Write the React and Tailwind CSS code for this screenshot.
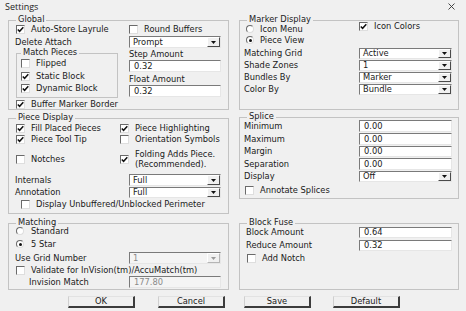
import React from 'react';

const Check = ({ checked }) => (
    <span className="w-[9px] h-[9px] shrink-0 bg-white border border-t-[#6a6a6a] border-l-[#6a6a6a] border-b-[#dedede] border-r-[#dedede] flex items-center justify-center">
        {checked && (
            <svg width="7" height="7" viewBox="0 0 7 7">
                <path d="M0.8 3.4 L2.6 5.3 L6.3 1.2" stroke="#111" strokeWidth="1.5" fill="none" />
            </svg>
        )}
    </span>
);

const Radio = ({ checked }) => (
    <span className="w-[8px] h-[8px] shrink-0 rounded-full bg-white border border-t-[#6a6a6a] border-l-[#6a6a6a] border-b-[#dedede] border-r-[#dedede] flex items-center justify-center">
        {checked && <span className="w-[3px] h-[3px] rounded-full bg-[#111]" />}
    </span>
);

const CheckRow = ({ checked, label, className = '' }) => (
    <div className={`flex items-center ${className}`}>
        <Check checked={checked} />
        <span className="ml-[6px] whitespace-nowrap">{label}</span>
    </div>
);

const Select = ({ value, disabled, className = '' }) => (
    <div className={`flex items-stretch border border-t-[#7a7a7a] border-l-[#7a7a7a] border-b-[#e6e6e6] border-r-[#e6e6e6] ${disabled ? 'bg-[#f4f4f4] text-[#8a8a8a]' : 'bg-white'} ${className}`}>
        <span className="flex-1 flex items-center pl-[3px] leading-none">{value}</span>
        <span className={`w-[13px] flex items-center justify-center bg-[#f0f0f0] border border-t-white border-l-white ${disabled ? 'border-b-[#b5b5b5] border-r-[#b5b5b5]' : 'border-b-[#4a4a4a] border-r-[#4a4a4a]'}`}>
            <svg width="5" height="3" viewBox="0 0 5 3">
                <path d="M0 0 L5 0 L2.5 3 Z" fill={disabled ? '#9a9a9a' : '#111'} />
            </svg>
        </span>
    </div>
);

const Input = ({ value, disabled, className = '' }) => (
    <div className={`flex items-center pl-[4px] leading-none border border-t-[#7a7a7a] border-l-[#7a7a7a] border-b-[#e6e6e6] border-r-[#e6e6e6] ${disabled ? 'bg-[#f4f4f4] text-[#8a8a8a]' : 'bg-white'} ${className}`}>
        {value}
    </div>
);

const Group = ({ title, className = '', legendClass = 'left-[7px]', children }) => (
    <div className={`relative border border-[#c3c3c3] ${className}`}>
        <span className={`absolute -top-[6px] ${legendClass} px-[2px] leading-[9px] bg-[#f0f0f0] text-[#222]`}>{title}</span>
        {children}
    </div>
);

const Button = ({ label }) => (
    <button className="w-[67px] h-[12px] flex items-center justify-center leading-none bg-[#f0f0f0] border-t border-l border-t-[#e2e2e2] border-l-[#cfcfcf] border-r-2 border-b-2 border-r-[#3c3c3c] border-b-[#3c3c3c] text-[#1a1a1a]">
        {label}
    </button>
);

const App = () => {
    return (
        <div className="w-[466px] h-[311px] bg-[#f0f0f0] text-[#1a1a1a] text-[8.3px] leading-[9px] font-['DejaVu_Sans',sans-serif] overflow-hidden">
            <div className="h-[20px] flex justify-between items-start">
                <span className="ml-[5px] mt-[1px] text-[9px] leading-[12px] font-['Open_Sans',sans-serif] text-[#222]">Settings</span>
                <svg className="mt-[3px] mr-[11px]" width="7" height="7" viewBox="0 0 7 7">
                    <path d="M0.5 0.5 L6.5 6.5 M6.5 0.5 L0.5 6.5" stroke="#333" strokeWidth="0.9" />
                </svg>
            </div>

            <div className="flex">
                {/* left column */}
                <div className="ml-[8px] w-[221px] flex flex-col">
                    <Group title="Global" className="h-[90px] pl-[7px] pr-[6px]">
                        <div className="mt-[4px] h-[8px] flex items-center">
                            <CheckRow checked label="Auto-Store Layrule" className="w-[113px]" />
                            <CheckRow label="Round Buffers" />
                        </div>
                        <div className="mt-[3px] h-[12px] flex items-center -ml-[1px]">
                            <span className="w-[114px]">Delete Attach</span>
                            <Select value="Prompt" className="w-[92px] h-[12px]" />
                        </div>
                        <div className="flex">
                            <Group title="Match Pieces" legendClass="left-[4px]" className="mt-[5px] w-[102px] h-[45px] pl-[4px]">
                                <CheckRow label="Flipped" className="mt-[4px] h-[10px]" />
                                <CheckRow checked label="Static Block" className="mt-[3px] h-[10px]" />
                                <CheckRow checked label="Dynamic Block" className="mt-[2px] h-[10px]" />
                            </Group>
                            <div className="ml-[11px] w-[92px] flex flex-col">
                                <span className="mt-[1px] h-[10px] leading-[10px]">Step Amount</span>
                                <Input value="0.32" className="mt-[1px] h-[12px]" />
                                <span className="mt-[2px] h-[10px] leading-[10px]">Float Amount</span>
                                <Input value="0.32" className="mt-[1px] h-[12px]" />
                            </div>
                        </div>
                        <CheckRow checked label="Buffer Marker Border" className="mt-[1px] h-[10px]" />
                    </Group>

                    <Group title="Piece Display" className="mt-[8px] h-[96px] pl-[7px] pr-[6px]">
                        <div className="mt-[4px] h-[10px] flex items-center">
                            <CheckRow checked label="Fill Placed Pieces" className="w-[104px]" />
                            <CheckRow checked label="Piece Highlighting" />
                        </div>
                        <div className="mt-[1px] h-[10px] flex items-center">
                            <CheckRow checked label="Piece Tool Tip" className="w-[104px]" />
                            <CheckRow label="Orientation Symbols" />
                        </div>
                        <div className="mt-[4px] h-[22px] flex items-center">
                            <CheckRow label="Notches" className="w-[104px]" />
                            <div className="flex items-center">
                                <Check checked />
                                <span className="ml-[6px] leading-[10px]">Folding Adds Piece.<br />(Recommended).</span>
                            </div>
                        </div>
                        <div className="mt-[4px] h-[12px] flex items-center -ml-[1px]">
                            <span className="w-[114px]">Internals</span>
                            <Select value="Full" className="w-[92px] h-[12px]" />
                        </div>
                        <div className="mt-[1px] h-[11px] flex items-center -ml-[1px]">
                            <span className="w-[114px]">Annotation</span>
                            <Select value="Full" className="w-[92px] h-[11px]" />
                        </div>
                        <CheckRow label="Display Unbuffered/Unblocked Perimeter" className="mt-[1px] h-[10px] pl-[5px]" />
                    </Group>

                    <Group title="Matching" className="mt-[9px] h-[67px] pl-[7px] pr-[6px]">
                        <div className="mt-[3px] h-[8px] flex items-center">
                            <Radio />
                            <span className="ml-[7px] leading-[8px]">Standard</span>
                        </div>
                        <div className="mt-[5px] h-[8px] flex items-center">
                            <Radio checked />
                            <span className="ml-[7px]">5 Star</span>
                        </div>
                        <div className="mt-[4px] h-[12px] flex items-center -ml-[1px]">
                            <span className="w-[114px]">Use Grid Number</span>
                            <Select value="1" disabled className="w-[92px] h-[12px]" />
                        </div>
                        <CheckRow label="Validate for InVision(tm)/AccuMatch(tm)" className="mt-[2px] h-[8px]" />
                        <div className="mt-[2px] h-[12px] flex items-center">
                            <span className="w-[113px] pl-[13px]">Invision Match</span>
                            <Input value="177.80" disabled className="w-[92px] h-[12px]" />
                        </div>
                    </Group>

                    <div className="mt-[6px] flex gap-[23px] pl-[60px]">
                        <Button label="OK" />
                        <Button label="Cancel" />
                    </div>
                </div>

                {/* right column */}
                <div className="ml-[10px] w-[220px] flex flex-col">
                    <Group title="Marker Display" className="h-[90px] pl-[4px] pr-[6px]">
                        <div className="flex">
                            <div className="w-[115px] pl-[2px] flex flex-col">
                                <div className="mt-[4px] h-[8px] flex items-center">
                                    <Radio />
                                    <span className="ml-[6px] leading-[8px]">Icon Menu</span>
                                </div>
                                <div className="mt-[3px] h-[8px] flex items-center">
                                    <Radio checked />
                                    <span className="ml-[6px]">Piece View</span>
                                </div>
                            </div>
                            <CheckRow checked label="Icon Colors" className="h-[8px] mt-[1px]" />
                        </div>
                        {[
                            ['Matching Grid', 'Active', 'mt-[4px]'],
                            ['Shade Zones', '1', 'mt-[1px]'],
                            ['Bundles By', 'Marker', 'mt-[1px]'],
                            ['Color By', 'Bundle', 'mt-[1px]'],
                        ].map(([label, value, mt]) => (
                            <div key={label} className={`${mt} h-[11px] flex items-center`}>
                                <span className="w-[115px]">{label}</span>
                                <Select value={value} className="w-[93px] h-[11px]" />
                            </div>
                        ))}
                    </Group>

                    <Group title="Splice" className="mt-[7px] h-[82px] pl-[4px] pr-[6px]">
                        {[
                            ['Minimum', 'mt-[2px]', 'h-[12px]'],
                            ['Maximum', 'mt-[1px]', 'h-[12px]'],
                            ['Margin', 'mt-[1px]', 'h-[11px]'],
                            ['Separation', 'mt-[1px]', 'h-[12px]'],
                        ].map(([label, mt, h]) => (
                            <div key={label} className={`${mt} ${h} flex items-center`}>
                                <span className="w-[115px]">{label}</span>
                                <Input value="0.00" className={`w-[93px] ${h}`} />
                            </div>
                        ))}
                        <div className="mt-[1px] h-[11px] flex items-center">
                            <span className="w-[115px]">Display</span>
                            <Select value="Off" className="w-[93px] h-[11px]" />
                        </div>
                        <CheckRow label="Annotate Splices" className="mt-[4px] h-[8px] pl-[1px]" />
                    </Group>

                    <Group title="Block Fuse" className="mt-[24px] h-[67px] pl-[6px] pr-[6px]">
                        <div className="mt-[3px] h-[11px] flex items-center">
                            <span className="w-[113px]">Block Amount</span>
                            <Input value="0.64" className="w-[93px] h-[11px]" />
                        </div>
                        <div className="mt-[2px] h-[11px] flex items-center">
                            <span className="w-[113px]">Reduce Amount</span>
                            <Input value="0.32" className="w-[93px] h-[11px]" />
                        </div>
                        <CheckRow label="Add Notch" className="mt-[3px] h-[8px] pl-[1px]" />
                    </Group>

                    <div className="mt-[6px] flex gap-[22px] pl-[5px]">
                        <Button label="Save" />
                        <Button label="Default" />
                    </div>
                </div>
            </div>
        </div>
    );
};

export default App;
